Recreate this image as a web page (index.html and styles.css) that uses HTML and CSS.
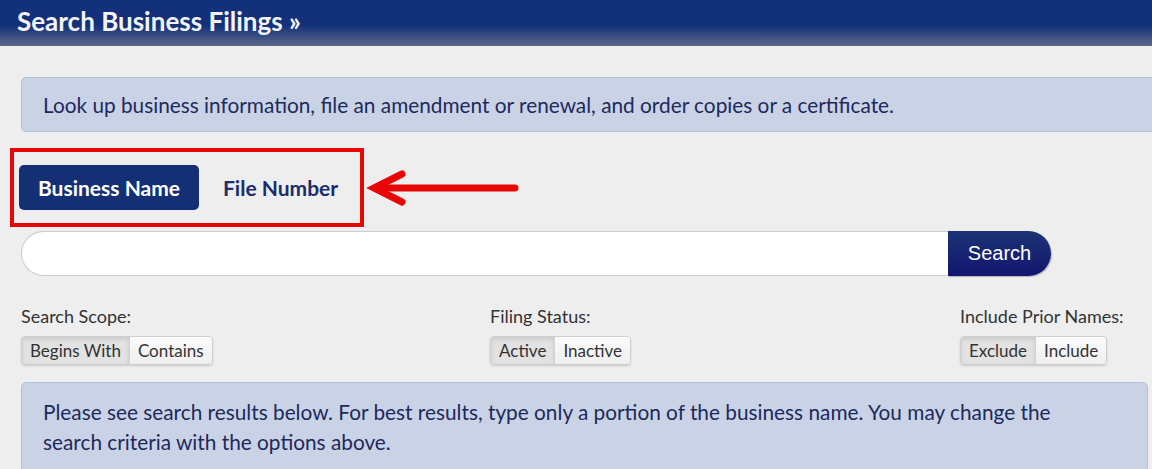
FILE: index.html
```html
<!DOCTYPE html>
<html lang="en">
<head>
  <meta charset="UTF-8" />
  <meta name="viewport" content="width=device-width, initial-scale=1.0" />
  <link rel="stylesheet" href="styles.css">
</head>
<body>

  <div class="page-header">
    <h1>Search Business Filings &raquo;</h1>
  </div>

  <div class="content">
    <div class="info-box intro">
      Look up business information, file an amendment or renewal, and order copies or a certificate.
    </div>

    <div class="tab-row">
      <div class="tab-frame">
        <button class="tab active">Business Name</button>
        <button class="tab">File Number</button>
      </div>
      <svg class="pointer" width="160" height="44" viewBox="0 0 160 44">
        <path d="M150 22 H12" stroke="#e80606" stroke-width="7" stroke-linecap="round" fill="none" />
        <path d="M37 8 L9 22 L37 36" stroke="#e80606" stroke-width="7" stroke-linecap="round" stroke-linejoin="miter" fill="none" />
      </svg>
    </div>

    <div class="search-bar">
      <input type="text" class="search-input">
      <button class="search-btn">Search</button>
    </div>

    <div class="options">
      <div class="option">
        <label>Search Scope:</label>
        <div class="btn-group">
          <button class="active">Begins With</button>
          <button>Contains</button>
        </div>
      </div>
      <div class="option">
        <label>Filing Status:</label>
        <div class="btn-group">
          <button class="active">Active</button>
          <button>Inactive</button>
        </div>
      </div>
      <div class="option">
        <label>Include Prior Names:</label>
        <div class="btn-group">
          <button class="active">Exclude</button>
          <button>Include</button>
        </div>
      </div>
    </div>

    <div class="info-box results">
      Please see search results below. For best results, type only a portion of the business name. You may change the search criteria with the options above.
    </div>
  </div>

</body>
</html>
```

FILE: styles.css
```css
body {
  margin: 0;
  background: #eeeeee;
  font-family: 'Lato', sans-serif;
  color: #333;
  overflow: hidden;
}

.page-header {
  height: 46px;
  background: linear-gradient(to bottom, #13307a 0%, #13307a 55%, #5b6889 100%);
}

.page-header h1 {
  margin: 0;
  padding: 6px 0 0 17px;
  font-size: 26px;
  line-height: 30px;
  font-weight: bold;
  color: #f4f4f8;
}

.content {
  padding: 31px 4px 0 21px;
}

.info-box {
  background: #cad3e6;
  border: 1px solid #adc3dd;
  border-radius: 5px;
  color: #1c2a5c;
  font-size: 20.8px;
}

.intro {
  height: 53px;
  line-height: 53px;
  padding-left: 21px;
  margin-right: -20px;
}

.tab-row {
  display: flex;
  align-items: center;
  margin: 16px 0 0 -11px;
}

.tab-frame {
  box-sizing: border-box;
  display: flex;
  align-items: center;
  gap: 4px;
  width: 354px;
  height: 79px;
  border: 4px solid #e80606;
  padding-left: 5px;
}

.tab {
  height: 45px;
  padding: 0 20px;
  border: none;
  border-radius: 5px;
  background: none;
  font-family: 'Lato', sans-serif;
  font-size: 21px;
  font-weight: bold;
  color: #1b2d6b;
}

.tab.active {
  background: #152f75;
  color: #fff;
  width: 180px;
  padding: 0;
}

.pointer {
  margin-left: 1px;
}

.search-bar {
  display: flex;
  margin-top: 4px;
}

.search-input {
  box-sizing: border-box;
  width: 927px;
  height: 45px;
  border: 1px solid #cccccc;
  border-right: none;
  border-radius: 23px 0 0 23px;
  background: #fff;
}

.search-btn {
  width: 103px;
  height: 45px;
  border: none;
  border-radius: 0 23px 23px 0;
  background: linear-gradient(to bottom, #1b3475, #13156f);
  box-shadow: 1px 1px 1px rgba(0, 0, 0, 0.25);
  color: #fff;
  font-family: 'Liberation Sans', Arial, sans-serif;
  font-size: 20px;
  padding: 0;
}

.options {
  display: grid;
  grid-template-columns: 469px 470px auto;
  margin-top: 30px;
}

.option label {
  display: block;
  font-size: 18px;
  line-height: 20px;
  color: #333;
}

.btn-group {
  display: inline-flex;
  margin-top: 10px;
  border: 1px solid #cfcfcf;
  border-radius: 4px;
  box-shadow: 0 1px 2px rgba(0, 0, 0, 0.15);
  overflow: hidden;
}

.btn-group button {
  height: 27px;
  padding: 0 8px;
  border: none;
  background: linear-gradient(to bottom, #fafafa, #efefef);
  font-family: 'Lato', sans-serif;
  font-size: 17px;
  color: #333;
}

.btn-group button + button {
  border-left: 1px solid #d2d2d2;
}

.btn-group button.active {
  background: #e2e2e2;
  box-shadow: inset 0 2px 4px rgba(0, 0, 0, 0.12);
}

.results {
  margin-top: 17px;
  padding: 14px 80px 14px 21px;
  line-height: 30px;
}
```
